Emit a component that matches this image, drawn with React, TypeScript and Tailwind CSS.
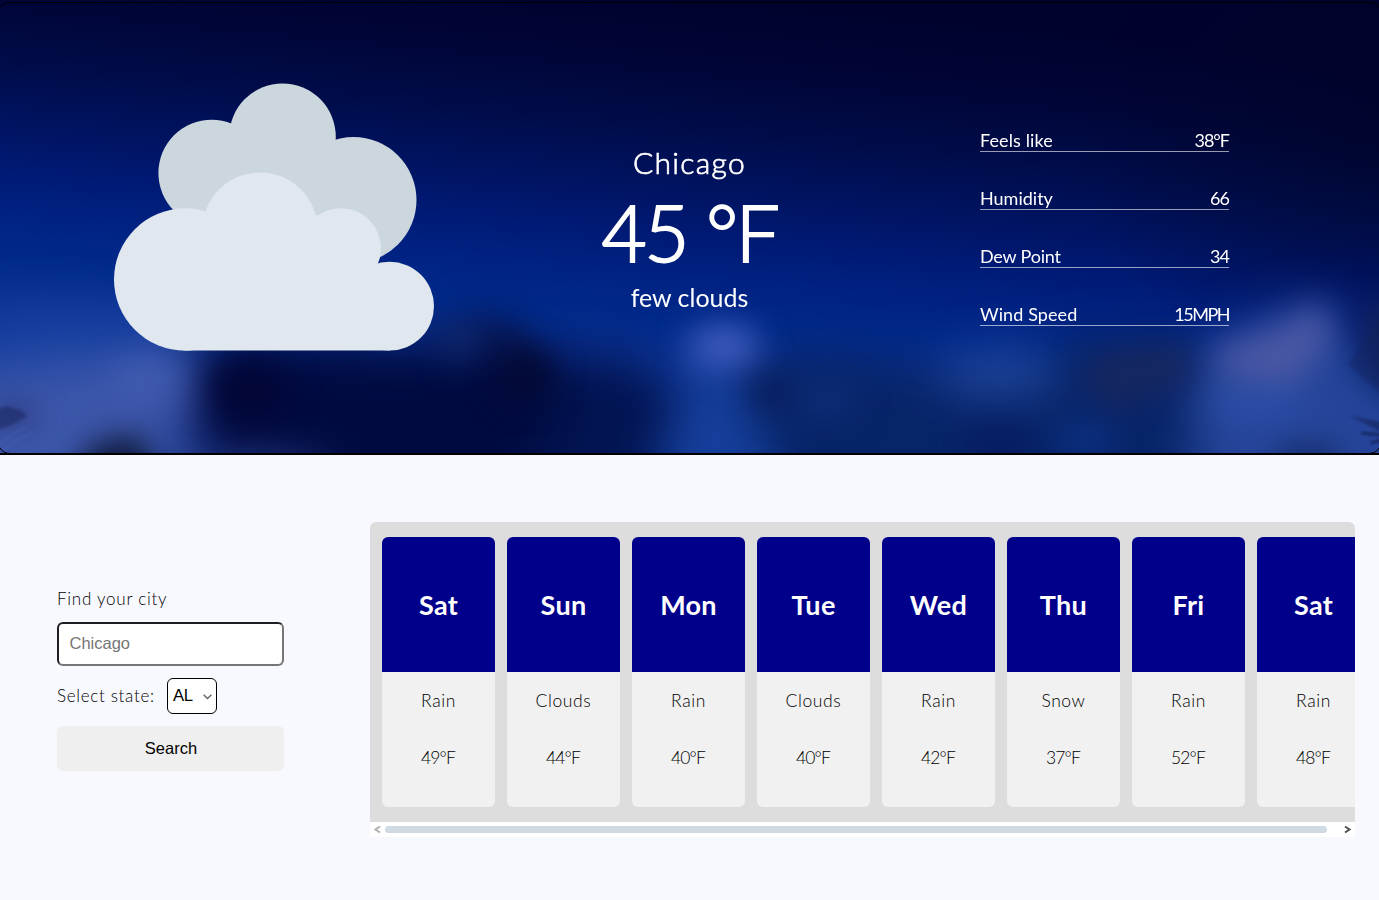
import React from "react";

type Day = { name: string; sky: string; temp: number };

const days: Day[] = [
  { name: "Sat", sky: "Rain", temp: 49 },
  { name: "Sun", sky: "Clouds", temp: 44 },
  { name: "Mon", sky: "Rain", temp: 40 },
  { name: "Tue", sky: "Clouds", temp: 40 },
  { name: "Wed", sky: "Rain", temp: 42 },
  { name: "Thu", sky: "Snow", temp: 37 },
  { name: "Fri", sky: "Rain", temp: 52 },
  { name: "Sat", sky: "Rain", temp: 48 },
];

const details = [
  { label: "Feels like", value: "38°F", tracking: "tracking-[0.1px]", valueTracking: "tracking-[-1px]" },
  { label: "Humidity", value: "66", tracking: "tracking-normal", valueTracking: "tracking-[-1px]" },
  { label: "Dew Point", value: "34", tracking: "tracking-[-0.2px]", valueTracking: "tracking-[-1px]" },
  { label: "Wind Speed", value: "15MPH", tracking: "tracking-[0.1px]", valueTracking: "tracking-[-1.5px]" },
];

function NightSky() {
  return (
    <svg className="absolute inset-0 h-[455px] w-full" viewBox="0 0 1379 455" preserveAspectRatio="none" aria-hidden="true">
      <defs>
        <linearGradient id="sky" gradientUnits="userSpaceOnUse" x1="690" y1="0" x2="655" y2="370">
          <stop offset="0" stopColor="#00022e" />
          <stop offset="0.2" stopColor="#000639" />
          <stop offset="0.35" stopColor="#000c4a" />
          <stop offset="0.5" stopColor="#001360" />
          <stop offset="0.6" stopColor="#001870" />
          <stop offset="0.72" stopColor="#002080" />
          <stop offset="0.85" stopColor="#00298a" />
          <stop offset="1" stopColor="#0c3394" />
        </linearGradient>
        <radialGradient id="edge" gradientUnits="userSpaceOnUse" cx="0" cy="0" r="1" gradientTransform="translate(1400 140) scale(330 250)">
          <stop offset="0" stopColor="#000424" stopOpacity="0.5" />
          <stop offset="1" stopColor="#000424" stopOpacity="0" />
        </radialGradient>
        <filter id="b14" x="-100%" y="-100%" width="300%" height="300%" colorInterpolationFilters="sRGB"><feGaussianBlur stdDeviation="16" /></filter>
        <filter id="b22" x="-100%" y="-100%" width="300%" height="300%" colorInterpolationFilters="sRGB"><feGaussianBlur stdDeviation="24" /></filter>
        <filter id="b2" x="-50%" y="-50%" width="200%" height="200%" colorInterpolationFilters="sRGB"><feGaussianBlur stdDeviation="1.6" /></filter>
      </defs>
      <rect width="1379" height="455" fill="url(#sky)" />
      <rect x="1040" width="339" height="455" fill="url(#edge)" />
      <g filter="url(#b22)">
        <ellipse cx="70" cy="335" rx="110" ry="28" fill="#1640a0" />
        <path d="M-80 368 L60 362 L195 345 L200 410 L130 520 L-80 520Z" fill="#3c56aa" />
        <path d="M200 340 L330 335 L430 345 L480 315 L540 352 L620 356 L700 400 L660 530 L190 530Z" fill="#021452" />
        <path d="M205 350 L440 360 L500 335 L560 370 L560 420 L480 530 L200 530Z" fill="#010a40" />
        <path d="M820 350 L1000 375 L1080 335 L1180 335 L1230 365 L1290 420 L1200 530 L760 530 L740 360Z" fill="#082468" />
        <ellipse cx="1000" cy="375" rx="62" ry="24" fill="#1f4498" />
        <path d="M1195 365 L1250 320 L1330 300 L1345 345 L1420 400 L1420 530 L1190 530Z" fill="#26459a" />
        <path d="M690 345 L740 365 L790 530 L640 530Z" fill="#153f9c" />
        <ellipse cx="230" cy="480" rx="100" ry="20" fill="#324b9c" />
      </g>
      <g filter="url(#b14)">
        <ellipse cx="724" cy="346" rx="36" ry="22" fill="#3f5cbe" />
        <path d="M745 372 L780 380 L795 400 L765 410Z" fill="#081a54" />
        <ellipse cx="145" cy="378" rx="34" ry="16" fill="#425cb0" />
        <path d="M65 500 L90 446 L140 434 L165 500Z" fill="#0c1634" />
        <ellipse cx="250" cy="390" rx="38" ry="30" fill="#020636" />
        <ellipse cx="525" cy="374" rx="28" ry="26" fill="#040a34" />
        <path d="M490 318 L510 328 L520 350 L495 350Z" fill="#081448" />
        <ellipse cx="460" cy="342" rx="18" ry="22" fill="#10286c" />
        <ellipse cx="825" cy="400" rx="30" ry="16" fill="#0f2f7a" />
        <path d="M1080 362 L1130 352 L1190 345 L1190 378 L1105 408Z" fill="#182860" />
        <path d="M1210 352 L1285 328 L1320 302 L1332 340 L1290 385 L1225 375Z" fill="#4c58a4" />
        <ellipse cx="1255" cy="405" rx="50" ry="15" fill="#2a4ea8" />
        <ellipse cx="1308" cy="462" rx="34" ry="14" fill="#10245c" />
        <ellipse cx="1000" cy="445" rx="35" ry="20" fill="#061c60" />
        <ellipse cx="1085" cy="440" rx="30" ry="18" fill="#0c3184" />
        <path d="M1358 310 L1420 290 L1420 400 L1366 380Z" fill="#12225c" />
        <ellipse cx="14" cy="415" rx="22" ry="9" fill="#242c66" />
      </g>
      <g filter="url(#b2)">
        <path d="M-4 410 L6 406 L20 410 L28 416 L10 426 L-4 430Z" fill="#18215a" opacity="0.5" />
        <path d="M-2 446 Q12 434 26 427 M4 450 Q16 438 32 433" stroke="#4a68bc" strokeWidth="2.5" fill="none" opacity="0.35" />
        <path d="M1348 364 L1382 394 L1382 320Z" fill="#12235c" opacity="0.35" />
        <path d="M1350 416 L1382 432 L1382 422Z" fill="#101c4c" opacity="0.5" />
        <path d="M1361 433 L1382 435 M1371 443 L1382 440" stroke="#101c4c" strokeWidth="2" />
      </g>
      <path d="M0 7.5 Q3 2.5 11 2.5 H1368 Q1376 2.5 1379 7.5" fill="none" stroke="#000" />
      <path d="M0 448 Q3 453.5 11 453.5 M1379 448 Q1376 453.5 1368 453.5" fill="none" stroke="#000" />
      <rect y="453" width="1379" height="2" fill="#000" />
    </svg>
  );
}

function Clouds() {
  return (
    <svg className="h-[268px] w-[320px]" viewBox="114 83 320 268" role="img" aria-label="few clouds">
      <g fill="#ccd7dd">
        <circle cx="211.7" cy="173" r="53.3" />
        <circle cx="282.5" cy="136.8" r="53.3" />
        <circle cx="353.5" cy="200" r="63" />
        <path d="M212 150 L245 135 H325 L354 160 V250 H212Z" />
      </g>
      <g fill="#e0e7ee">
        <circle cx="185.2" cy="279.5" r="71.2" />
        <circle cx="260" cy="230" r="57.6" />
        <circle cx="341" cy="248.3" r="40" />
        <circle cx="389.6" cy="306.2" r="44.4" />
        <path d="M185 240 L215 215 H341 L370 260 L390 290 V350.6 H185Z" />
      </g>
    </svg>
  );
}

export default function App() {
  return (
    <div className="flex h-[900px] w-full flex-col overflow-hidden bg-[#f8f9ff] font-[Lato,sans-serif]">
      <header className="relative h-[455px] shrink-0">
        <NightSky />
        <div className="relative grid h-full grid-cols-[548px_283px_1fr] text-white">
          <div className="pt-[83px] pl-[114px]">
            <Clouds />
          </div>
          <div className="flex flex-col items-center pt-[143px] whitespace-nowrap">
            <h2 className="text-[30px] leading-[38px] font-light tracking-[1.3px] [-webkit-text-stroke:0.7px_white]">Chicago</h2>
            <p className="text-[78px] leading-[102px] font-light tracking-[-2.4px] [-webkit-text-stroke:2px_white]">45 °F</p>
            <p className="text-[25px] leading-[28px]">few clouds</p>
          </div>
          <dl className="flex w-[398px] flex-col gap-[35px] pt-[129px] pl-[149px]">
            {details.map((d) => (
              <div key={d.label} className="flex h-[23px] justify-between border-b border-white/60 text-[18px] leading-[22px]">
                <dt className={d.tracking}>{d.label}</dt>
                <dd className={d.valueTracking}>{d.value}</dd>
              </div>
            ))}
          </dl>
        </div>
      </header>

      <main className="flex flex-1">
        <form className="w-[370px] shrink-0 pt-[132px] pl-[57px]" onSubmit={(e) => e.preventDefault()}>
          <label className="block h-[35px] text-[17px] leading-[24px] font-light tracking-[0.75px] text-black" htmlFor="city">Find your city</label>
          <input
            id="city"
            placeholder="Chicago"
            className="block h-[44px] w-[227px] rounded-md border-2 border-t-[#1f1f22] border-r-[#767676] border-b-[#767676] border-l-[#1f1f22] bg-white px-[10.5px] pb-px font-['Liberation_Sans',sans-serif] text-[16.5px] text-black placeholder:text-[#757575]"
          />
          <div className="mt-3 flex h-[36px] items-center">
            <label className="w-[110px] pb-px text-[17px] leading-[24px] font-light tracking-[0.68px] text-black">Select state:</label>
            <button type="button" className="flex h-[36px] w-[50px] items-center justify-between rounded-md border border-black bg-white pr-1 pl-[5px] font-['Liberation_Sans',sans-serif] text-[16.7px] tracking-[-0.3px] text-black">
              AL
              <svg className="mt-px h-[6px] w-[9px]" viewBox="0 0 9 6" fill="none" stroke="#666" strokeWidth="1.4">
                <path d="M0.6 0.8 L4.5 4.6 L8.4 0.8" />
              </svg>
            </button>
          </div>
          <button className="mt-3 h-[45px] w-[227px] rounded-md bg-[#efefef] pl-px font-['Liberation_Sans',sans-serif] text-[16.5px] text-black">Search</button>
        </form>

        <section className="mt-[67px] h-[315px] w-[985px] overflow-hidden rounded-t-md">
          <div className="flex h-[300px] gap-3 overflow-hidden bg-[#dddddd] px-3 pt-[15px]">
            {days.map((d, i) => (
              <article key={i} className="h-[270px] w-[113px] shrink-0 overflow-hidden rounded-md bg-[#f1f1f1] text-center">
                <h3 className="h-[135px] bg-[#00008b] text-[27px] leading-[135px] font-bold tracking-[0.3px] text-white">{d.name}</h3>
                <p className="pt-[17px] text-[17.5px] leading-[24px] font-light tracking-[0.6px] text-black">{d.sky}</p>
                <p className="pt-[33px] pr-px text-[17.5px] leading-[24px] font-light tracking-[-0.9px] text-black">{d.temp}°F</p>
              </article>
            ))}
          </div>
          <div className="flex h-[15px] items-center bg-white">
            <svg className="w-[15px] shrink-0" viewBox="0 0 15 15" fill="none" stroke="#b0b0b0" strokeWidth="2">
              <path d="M10 4.5 L5.5 7.5 L10 10.5" />
            </svg>
            <div className="h-[7px] w-[942px] rounded bg-[#d0dae2]" />
            <svg className="ml-auto w-[15px] shrink-0" viewBox="0 0 15 15" fill="none" stroke="#505050" strokeWidth="2">
              <path d="M5 4.5 L9.5 7.5 L5 10.5" />
            </svg>
          </div>
        </section>
      </main>
    </div>
  );
}
